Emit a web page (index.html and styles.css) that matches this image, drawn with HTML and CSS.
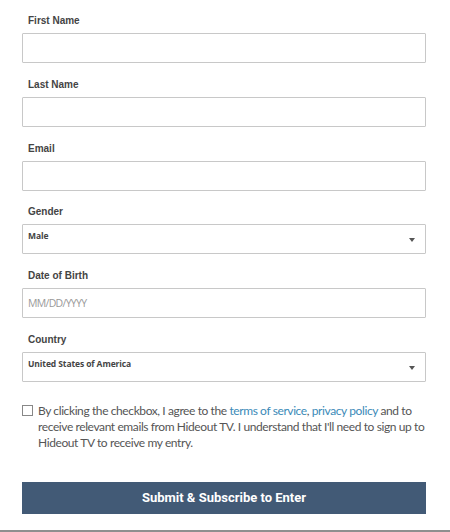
FILE: index.html
```html
<!DOCTYPE html>
<html>
<head>
<meta charset="utf-8">
<link rel="stylesheet" href="styles.css">
</head>
<body>
<form class="form">
  <div class="field">
    <label class="label">First Name</label>
    <div class="box"></div>
  </div>
  <div class="field">
    <label class="label">Last Name</label>
    <div class="box"></div>
  </div>
  <div class="field">
    <label class="label">Email</label>
    <div class="box"></div>
  </div>
  <div class="field">
    <label class="label">Gender</label>
    <div class="box select"><span class="select-value">Male</span><span class="caret"></span></div>
  </div>
  <div class="field">
    <label class="label">Date of Birth</label>
    <div class="box"><span class="placeholder">MM/DD/YYYY</span></div>
  </div>
  <div class="field">
    <label class="label">Country</label>
    <div class="box select"><span class="select-value">United States of America</span><span class="caret"></span></div>
  </div>
  <div class="consent">
    <span class="checkbox"></span>
    <p class="consent-text">By clicking the checkbox, I agree to the <a class="link">terms of service</a>, <a class="link">privacy policy</a> and to receive relevant emails from Hideout TV. I understand that I'll need to sign up to Hideout TV to receive my entry.</p>
  </div>
  <button class="submit" type="button">Submit &amp; Subscribe to Enter</button>
</form>
<div class="bottom-line"></div>
</body>
</html>
```

FILE: styles.css
```css
* { box-sizing: border-box; }
html, body { margin: 0; padding: 0; background: #fff; }
body { width: 450px; height: 532px; position: relative; overflow: hidden; }
.form {
  padding: 14px 24px 0 22px;
  display: flex;
  flex-direction: column;
}
.field { display: flex; flex-direction: column; height: 63.8px; }
.label {
  font-family: "Liberation Sans", Arial, sans-serif;
  font-weight: bold;
  font-size: 10px;
  color: #444;
  padding-left: 6px;
  height: 19px;
  line-height: 13px;
}
.box {
  width: 404px;
  height: 30px;
  border: 1px solid #c8c8c8;
  border-radius: 1px;
  position: relative;
  padding-left: 5px;
}
.select-value {
  font-family: "Open Sans", sans-serif;
  font-weight: bold;
  font-size: 8.5px;
  letter-spacing: -0.1px;
  color: #444;
  display: block;
  padding-top: 5px;
}
.caret {
  position: absolute;
  right: 10px;
  top: 13px;
  width: 0; height: 0;
  border-left: 3.5px solid transparent;
  border-right: 3.5px solid transparent;
  border-top: 4px solid #555;
}
.placeholder {
  font-family: "Open Sans", sans-serif;
  font-size: 10.5px;
  letter-spacing: -0.7px;
  color: #999;
  line-height: 28px;
  display: block;
}
.consent {
  display: flex;
  gap: 5px;
  margin-top: 6px;
}
.checkbox {
  flex: none;
  width: 11px; height: 11px;
  border: 1px solid #888;
  margin-top: 2px;
}
.consent-text {
  flex: none;
  margin: 0;
  font-family: "Lato", sans-serif;
  font-size: 12px;
  letter-spacing: -0.4px;
  line-height: 16px;
  color: #555;
  width: 396px;
}
.link { color: #3b8ab8; }
.submit {
  margin-top: 31px;
  width: 404px;
  height: 32px;
  background: #425a76;
  border: none;
  color: #fff;
  font-family: Roboto, sans-serif;
  font-weight: bold;
  font-size: 13px;
  padding: 0;
}
.bottom-line {
  position: absolute;
  left: 0; right: 0; bottom: 0;
  height: 2px;
  background: #8f8f8f;
}
```
